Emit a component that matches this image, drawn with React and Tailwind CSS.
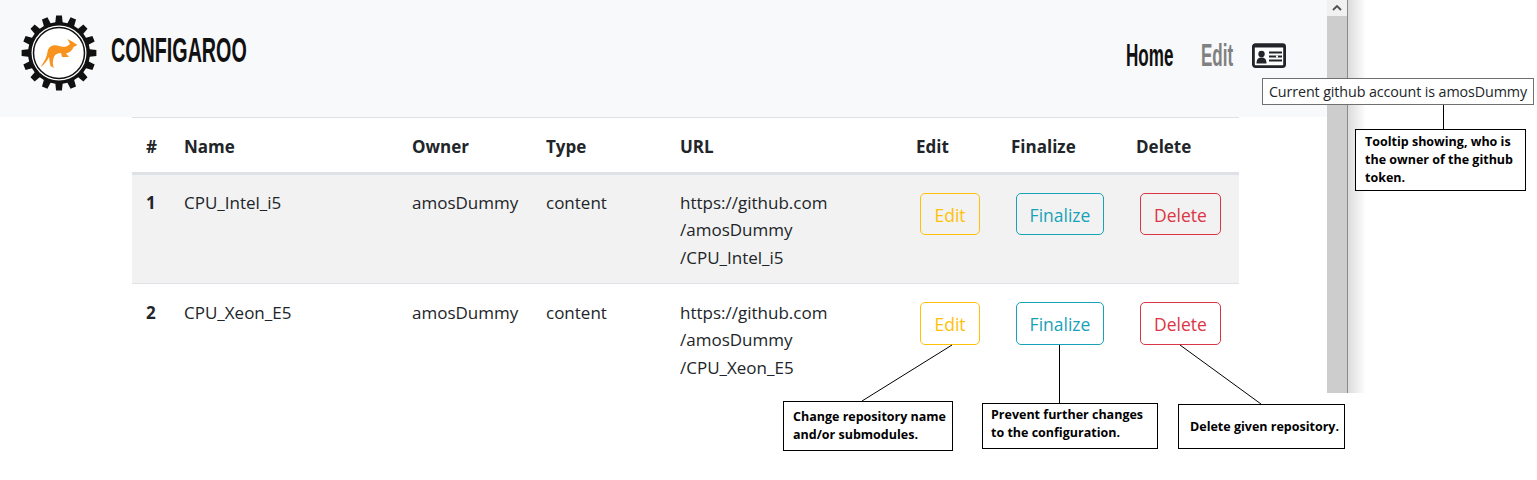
import React from "react";

function gearPath(cx, cy, rOuter, rRoot, teeth) {
  const step = (Math.PI * 2) / teeth;
  const pts = [];
  for (let i = 0; i < teeth; i++) {
    const a = i * step - Math.PI / 2;
    const p = (ang, r) => `${(cx + r * Math.cos(ang)).toFixed(2)} ${(cy + r * Math.sin(ang)).toFixed(2)}`;
    pts.push(p(a - step * 0.3, rRoot), p(a - step * 0.2, rOuter), p(a + step * 0.2, rOuter), p(a + step * 0.3, rRoot));
  }
  return "M" + pts.join("L") + "Z";
}

function Logo() {
  return (
    <svg width="76" height="76" viewBox="0 0 76 76" className="shrink-0">
      <path d={gearPath(38, 38, 37.5, 31, 16)} fill="#111" />
      <circle cx="38" cy="38" r="27.5" fill="#fff" />
      <circle cx="38" cy="38" r="25.5" fill="none" stroke="#111" strokeWidth="1.5" />
      <path
        d="M19.5 52 C23 47 26 42 26.5 37 C27 32 32 29 38 31 C42 32.5 46 32 49 29 L46.5 24 L52 27 L56.5 30 L52.5 32 C51 36 48 38 45 38.5 L48 42 L41 42 L40 38 C37 38 34 39 33 42 C32 45 31 48 33 53 L29.5 51 C28.5 47 28.5 44 28 42 C26 46 23 50 19.5 52 Z"
        fill="#f7931e"
      />
    </svg>
  );
}

function IdCard() {
  return (
    <svg width="34" height="25" viewBox="0 0 34 25" className="shrink-0">
      <rect x="1.4" y="1.6" width="31.2" height="22" rx="2" fill="#fff" stroke="#212529" strokeWidth="2.8" />
      <rect x="1" y="1" width="32" height="3.6" rx="1.5" fill="#212529" />
      <circle cx="9.5" cy="11" r="3.2" fill="#212529" />
      <path d="M4.5 20.5 C4.5 16 6.5 14.5 9.5 14.5 C12.5 14.5 14.5 16 14.5 20.5 Z" fill="#212529" />
      <path d="M17 9.5 H30 M17 13.5 H30 M17 17.5 H30" stroke="#212529" strokeWidth="1.8" />
      <path d="M24 13.5 H26" stroke="#fff" strokeWidth="1.8" />
    </svg>
  );
}

const logoFont = "font-['Liberation_Sans',sans-serif] font-bold";

function Btn({ color, w, h, children }) {
  return <div className={`${w} ${h} flex items-center justify-center rounded-[5px] border pt-[2px] text-[17.5px] ${color}`}>{children}</div>;
}

function Row({ n, name, url, rowClass, btnTop, btnH }) {
  const cols = "grid grid-cols-[52px_228px_134px_134px_236px_95px_125px_103px]";
  return (
    <div className={`${cols} ${rowClass} h-[109px]`}>
      <div className="pl-[14px] font-bold">{n}</div>
      <div>{name}</div>
      <div>amosDummy</div>
      <div>content</div>
      <div className="leading-[27.4px] -mt-[1px]">
        https://github.com
        <br />/amosDummy
        <br />/{url}
      </div>
      <div className={`pl-[4px] ${btnTop}`}>
        <Btn w="w-[60px]" h={btnH} color="border-[#ffc107] text-[#ffc107]">Edit</Btn>
      </div>
      <div className={`pl-[5px] ${btnTop}`}>
        <Btn w="w-[88px]" h={btnH} color="border-[#17a2b8] text-[#17a2b8]">Finalize</Btn>
      </div>
      <div className={`pl-[4px] ${btnTop}`}>
        <Btn w="w-[81px]" h={btnH} color="border-[#dc3545] text-[#dc3545]">Delete</Btn>
      </div>
    </div>
  );
}

function Note({ className, children }) {
  return (
    <div className={`absolute bg-white border border-black text-black font-bold text-[12.5px] leading-[18px] ${className}`}>
      {children}
    </div>
  );
}

export default function App() {
  const cols = "grid grid-cols-[52px_228px_134px_134px_236px_95px_125px_103px]";
  return (
    <div className="relative h-[480px] w-[1537px] overflow-hidden bg-white font-['Open_Sans',sans-serif] text-[17px] text-[#212529]">
      <div className="flex h-[393px]">
        <div className="w-[1327px] shrink-0">
          <header className="flex h-[117px] items-center bg-[#f8f9fa] pl-[21px] pb-[11px]">
            <Logo />
            <div className="w-[140px] ml-[14px] -mt-[8px]">
              <div className={`${logoFont} text-[35px] leading-none origin-left scale-x-[0.563] whitespace-nowrap text-[#111]`}>CONFIGAROO</div>
            </div>
            <nav className="ml-auto flex items-center pr-[41px] mt-[4px]">
              <div className="w-[75px]">
                <div className={`${logoFont} text-[31px] leading-none origin-left scale-x-[0.55] text-[#111]`}>Home</div>
              </div>
              <div className="w-[51px]">
                <div className={`${logoFont} text-[31px] leading-none origin-left scale-x-[0.55] text-[#808080]`}>Edit</div>
              </div>
              <IdCard />
            </nav>
          </header>
          <div className="ml-[132px] w-[1107px]">
            <div className={`${cols} h-[58px] items-center border-t border-b-[3px] border-[#dee2e6] pt-[3px] font-bold`}>
              <div className="pl-[14px]">#</div>
              <div>Name</div>
              <div>Owner</div>
              <div>Type</div>
              <div>URL</div>
              <div>Edit</div>
              <div>Finalize</div>
              <div>Delete</div>
            </div>
            <Row n="1" name="CPU_Intel_i5" url="CPU_Intel_i5" rowClass="bg-[#f2f2f2] border-b border-[#dee2e6] pt-[15px]" btnTop="pt-[3px]" btnH="h-[42px]" />
            <Row n="2" name="CPU_Xeon_E5" url="CPU_Xeon_E5" rowClass="bg-white pt-[16px]" btnTop="pt-[2px]" btnH="h-[43px]" />
          </div>
        </div>
        <div className="w-[20px] shrink-0 bg-[#cdcdcd]">
          <div className="flex h-[16px] items-center justify-center bg-[#f1f1f1]">
            <svg width="10" height="6" viewBox="0 0 10 6"><path d="M1 5 L5 1 L9 5" fill="none" stroke="#505050" strokeWidth="1.8" /></svg>
          </div>
        </div>
        <div className="w-[1px] shrink-0 bg-[#8a8a8a]" />
        <div className="w-[18px] shrink-0 bg-gradient-to-r from-[#dcdcdc] to-white" />
      </div>

      <svg className="absolute inset-0 pointer-events-none" width="1537" height="480">
        <line x1="1443.5" y1="105" x2="1443.5" y2="129" stroke="#000" />
        <line x1="952" y1="345" x2="862" y2="401" stroke="#000" />
        <line x1="1059.5" y1="345" x2="1059.5" y2="403" stroke="#000" />
        <line x1="1180" y1="345" x2="1261" y2="404" stroke="#000" />
      </svg>

      <div className="absolute left-[1262px] top-[78px] flex h-[27px] w-[272px] items-center justify-center whitespace-nowrap border border-[#707070] bg-white pt-[1px] text-[14.3px] tracking-[-0.1px] text-[#212529]">
        Current github account is amosDummy
      </div>
      <Note className="left-[1355px] top-[129px] h-[62px] w-[171px] pl-[9px] pt-[3px]">
        Tooltip showing, who is
        <br />the owner of the github
        <br />token.
      </Note>
      <Note className="left-[783px] top-[401px] h-[50px] w-[170px] pl-[9px] pt-[6px]">
        Change repository name
        <br />and/or submodules.
      </Note>
      <Note className="left-[982px] top-[403px] h-[46px] w-[176px] pl-[8px] pt-[2px]">
        Prevent further changes
        <br />to the configuration.
      </Note>
      <Note className="left-[1178px] top-[404px] flex h-[45px] w-[167px] items-center pl-[11px]">
        Delete given repository.
      </Note>
    </div>
  );
}
